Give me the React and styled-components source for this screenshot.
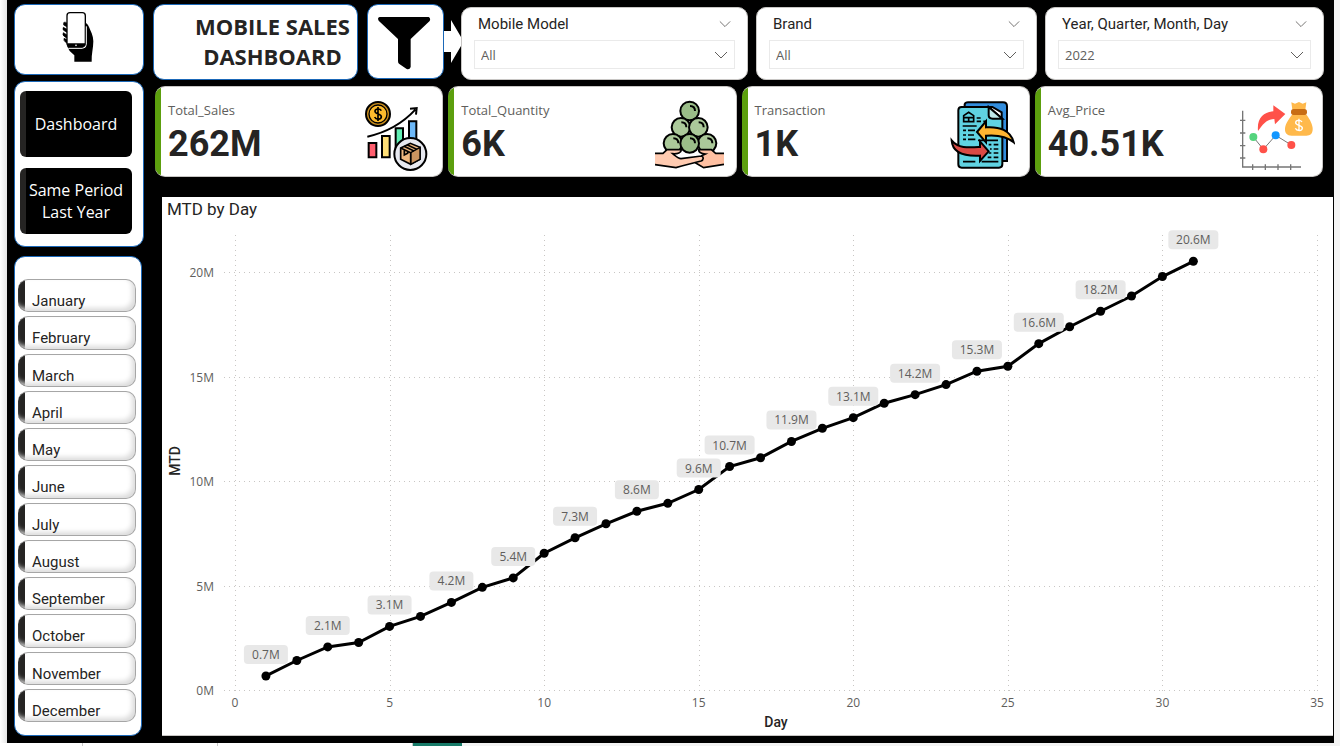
import React from "react";
import styled, { createGlobalStyle } from "styled-components";

const din = `Roboto, "Liberation Sans", sans-serif`;
const segoe = `"Open Sans", "Noto Sans", sans-serif`;

const GlobalStyle = createGlobalStyle`
  *, *::before, *::after { box-sizing: border-box; }
  body { margin: 0; background: #f3f3f3; color: #252423; font-family: ${segoe}; }
  button, select { font: inherit; color: inherit; }
  svg { display: block; }
`;

const Page = styled.div`
  display: flex;
  flex-direction: column;
  min-height: 100vh;
  background: linear-gradient(to right, #fff, #e6e6e6 7px, #f3f3f3 7px);
`;

const Canvas = styled.div`
  flex: 1;
  display: flex;
  gap: 9px;
  margin: 0 6px 0 7px;
  padding: 4px 1px 7px 7px;
  background: #000;
`;

const Sidebar = styled.aside`
  flex: none;
  width: 130px;
  display: flex;
  flex-direction: column;
`;

const Main = styled.main`
  flex: 1;
  min-width: 0;
  display: flex;
  flex-direction: column;
`;

const Card = styled.section`
  background: #fff;
  border: 1px solid #1b68b8;
  border-radius: 11px;
`;

const LogoCard = styled(Card)`
  height: 71px;
  margin-bottom: 6px;
  padding-top: 6px;
  padding-right: 4px;
  display: flex;
  justify-content: center;
`;

const NavCard = styled(Card).attrs({ as: "nav" })`
  display: flex;
  flex-direction: column;
  gap: 11px;
  height: 166px;
  margin-bottom: 9px;
  padding: 9px 11px 12px 5px;
`;

const NavButton = styled.button`
  flex: 1;
  padding: 0 2px;
  border: 0;
  border-radius: 6px;
  background: linear-gradient(to right, #252423 6px, #000 6px);
  color: #fff;
  font-size: 16px;
  line-height: 22px;
`;

const MonthCard = styled(Card)`
  flex: 1;
  display: flex;
  flex-direction: column;
  gap: 4px;
  margin-right: 2px;
  padding: 22px 5px 13px 3px;
`;

const MonthButton = styled.button`
  flex: 1;
  min-height: 30px;
  padding: 11px 14px 0;
  border: 1px solid #a6a6a6;
  border-left: 0;
  border-radius: 10px;
  background: linear-gradient(to right, #252423 7px, #fff 7px);
  box-shadow: inset -3px -3px 5px #dcdcdc;
  font-family: ${din};
  font-size: 15px;
  font-weight: 400;
  line-height: 20px;
  text-align: left;
`;

const TopRow = styled.header`
  display: flex;
  height: 78px;
  margin-right: 9px;
`;

const TitleCard = styled(Card)`
  flex: none;
  width: 205px;
  height: 76px;
  margin-right: 9px;
  padding: 6px 0 0 34px;
`;

const Title = styled.h1`
  margin: 0;
  font-size: 22px;
  font-weight: 700;
  line-height: 30px;
  text-align: center;
`;

const FilterCard = styled(Card)`
  flex: none;
  width: 77px;
  height: 75px;
  display: flex;
  justify-content: center;
  padding: 11px 4px 0 0;
`;

const ArrowSlot = styled.div`
  flex: none;
  width: 17px;
  padding-top: 15px;
`;

const SlicerRow = styled.div`
  flex: 1;
  min-width: 0;
  display: grid;
  grid-template-columns: 287fr 281fr 279fr;
  gap: 8px;
  padding-top: 3px;
`;

const SlicerCard = styled.section`
  height: 73px;
  min-width: 0;
  padding: 6px 12px 0;
  border: 1px solid #c8c6c4;
  border-radius: 10px;
  background: #fff;
`;

const SlicerHead = styled.div`
  display: flex;
  justify-content: space-between;
  align-items: center;
  height: 20px;
  margin-bottom: 6px;
  padding: 0 4px;
  font-family: ${din};
  font-size: 15px;
`;

const ChevronButton = styled.button`
  padding: 0;
  border: 0;
  background: none;
`;

const SelectBox = styled.div`
  display: grid;
  align-items: center;
  height: 29px;
  border: 1px solid #eaeaea;
  color: #605e5c;
  & > * { grid-area: 1 / 1; }
  & > svg { justify-self: end; margin-right: 6px; pointer-events: none; }
`;

const Select = styled.select`
  appearance: none;
  width: 100%;
  height: 100%;
  padding: 0 24px 0 6px;
  border: 0;
  background: transparent;
  font-size: 13px;
`;

const KpiRow = styled.div`
  display: grid;
  grid-template-columns: repeat(4, 1fr);
  gap: 5px;
  margin: 4px 10px 20px 2px;
`;

const KpiCard = styled.section`
  display: flex;
  justify-content: space-between;
  height: 91px;
  padding: 13px 7px 0 13px;
  border: 1px solid #c8c6c4;
  border-left: 0;
  border-radius: 10px;
  background: linear-gradient(to right, #5c9f0e 6px, #fff 6px);
`;

const KpiLabel = styled.h2`
  margin: 0;
  color: #605e5c;
  font-size: 13px;
  font-weight: 400;
  line-height: 20px;
`;

const KpiValue = styled.p`
  margin: 0;
  font-family: ${din};
  font-size: 36px;
  font-weight: 700;
  line-height: 48px;
`;

const KpiIcon = styled.div`
  display: flex;
  justify-content: center;
  width: 78px;
`;

const ChartCard = styled.section`
  flex: 1;
  margin-left: 9px;
  border-bottom: 1px solid #c8c6c4;
  background: #fff;
`;

const ChartTitle = styled.h2`
  margin: 0;
  padding-left: 5px;
  font-family: ${din};
  font-size: 17px;
  font-weight: 400;
  line-height: 24px;
`;

const Chart = styled.svg`
  width: 100%;
  height: auto;
  font-family: ${segoe};
  font-size: 12px;
  fill: #605e5c;
  text-anchor: middle;
`;

const AxisTitle = styled.text`
  fill: #252423;
  font-family: ${din};
  font-size: 14px;
  font-weight: 500;
`;

const TabStrip = styled.footer`
  display: flex;
  height: 3px;
`;

const Tab = styled.div`
  flex: none;
  width: ${(p) => p.$width}px;
  border-right: ${(p) => (p.$active ? "0" : "1px solid #c8c8c8")};
  background: ${(p) => (p.$active ? "#177a68" : "#fff")};
`;

const Chevron = ({ size = 14 }) => (
  <svg width={size} height="8" viewBox="0 0 14 8" fill="none" stroke="#605e5c" aria-hidden="true">
    <path d="M1 1l6 6 6-6" />
  </svg>
);

const PhoneIcon = () => (
  <svg width="33" height="51" viewBox="180 33 99 153" aria-hidden="true">
    <path d="M198 138l8 15 14 13v19h52c-1-22 5-40 5-61 0-17-8-31-13-43-4-10-8-13-13-12v73z" />
    <path d="M188 68c4-3 8-1 12 3v11l-12-7zM187 82q-4 8 4 11l9 5v-9zM187 98q-4 8 4 12l9 6v-10zM189 115q-2 7 4 11l8 6-1-12z" stroke="#000" strokeWidth="2" />
    <rect x="198" y="38" width="55" height="101" rx="9" fill="#fff" stroke="#000" strokeWidth="4" />
    <path d="M199 130h53v4q-1 7-7 7h-39q-7-1-7-7z" />
    <path d="M202 145h42q12-1 12-12V79" fill="none" stroke="#fff" strokeWidth="3" />
    <circle cx="225" cy="136" r="2.5" fill="#fff" />
  </svg>
);

const FunnelIcon = () => (
  <svg width="54" height="54" viewBox="255 48 162 162" aria-hidden="true">
    <path d="M263 51h147q7 4 3 12l-57 54v84q-3 9-12 6l-23-16q-3-2-3-8v-66l-58-55q-5-9 3-11z" />
  </svg>
);

const ArrowIcon = () => (
  <svg width="17" height="45" viewBox="0 0 17 45" fill="#fff" aria-hidden="true">
    <path d="M0 12h7V1l10 17v9L7 44V33H0z" />
  </svg>
);

const SalesIcon = () => (
  <svg width="64" height="71" viewBox="42 30 192 213" fill="none" stroke="#000" strokeWidth="6" aria-hidden="true">
    <path d="M52 140c55-12 106-40 144-81M180 56l20-2-2 20" />
    <circle cx="84" cy="72" r="36" fill="#c98d1c" />
    <circle cx="84" cy="72" r="27" fill="#fdbb2d" strokeWidth="4" />
    <path d="M94 62c-4-7-19-7-19 2 0 10 19 6 19 16 0 9-16 10-20 1M84 51v42" strokeWidth="5" />
    <path d="M56 159h23v43H56z" fill="#ff5e6e" />
    <path d="M96 138h23v64H96z" fill="#ffdf76" />
    <path d="M137 115h22v80h-22z" fill="#61efb4" />
    <path d="M177 94h22v80h-22z" fill="#6cb8f8" />
    <circle cx="181" cy="192" r="48" fill="#e7e9f0" />
    <path d="M152 174l29-14 29 12v36l-28 15-30-15z" fill="#edb77f" strokeWidth="5" />
    <path d="M182 188l28-16v36l-28 15z" fill="#cb9560" strokeWidth="4" />
    <path d="M152 174l30 14v34M162 169l30 14M171 164l29 14M163 178v17l10-5v-8" strokeWidth="5" />
  </svg>
);

const spheres = [
  [146, 66], [120, 115], [172, 115], [96, 163], [198, 163], [146, 163],
];

const QuantityIcon = () => (
  <svg width="69" height="70" viewBox="42 33 207 210" fill="none" stroke="#000" strokeWidth="6" aria-hidden="true">
    {spheres.map(([x, y], i) => (
      <g key={i}>
        <circle cx={x} cy={y} r="28" fill={i === 0 || i === 5 ? "#9abd88" : "#abc99a"} />
        <path d={`M${x + 1} ${y - 15}q15 0 15 15`} />
      </g>
    ))}
    <path d="M42 193h22l15-10h42c2 10-11 12-26 12 10 7 15 14 24 15l62-9c7 1 6 12-1 14l-62 16-14 5-62-8z" fill="#ffcbb1" stroke="none" />
    <path d="M249 193h-25l-13-10h-37c-3 8 5 11 19 13l-12 6c7 0 7 12 0 15l-19 6 26 14 61-11z" fill="#ffc0a2" stroke="none" />
    <path d="M42 193h24l12-11h43c0 9-11 13-26 12 12 10 16 15 25 15l61-8c8 2 7 12-1 15l-58 15-17 5-63-9M249 193h-25l-13-11h-38c0 9 9 12 20 13l-13 6M163 221l25 15 61-10" strokeWidth="5" />
  </svg>
);

const TransactionIcon = () => (
  <svg width="65" height="69" viewBox="30 33 195 207" fill="none" stroke="#000" strokeWidth="6" aria-hidden="true">
    <path d="M74 46q2-6 10-6h105q12 0 12 12v164h-16V70l-28-16H74z" fill="#328ddd" />
    <path d="M65 54h81l41 36v136q0 10-10 10H65q-10 0-10-10V64q0-10 10-10z" fill="#60d3e2" />
    <path d="M146 54v25q0 10 12 10h29z" fill="#bfe8e8" />
    <path d="M71 80l15-10 15 10v18H71zM71 86h30M86 84v15M110 87h12M130 97h11M110 97h13M68 111h42M69 124h9M84 124h21M69 138h9M84 138h18M69 151h9M84 151h22M114 154h60M146 167h8M161 167h14M150 180h5M161 180h14M146 192h8M161 192h14M143 205h11M161 205h14M69 218h37M125 218h50" strokeWidth="5" />
    <path d="M111 129l27-32v18c39-3 74 9 83 45-20-17-46-23-83-20v20z" fill="#ffb531" />
    <path d="M146 187l-26-30v17c-34 2-65 5-85-20 2 32 26 49 85 46v16z" fill="#d94a45" />
  </svg>
);

const PriceIcon = () => (
  <svg width="76" height="71" viewBox="24 30 228 213" fill="none" stroke="#757575" strokeWidth="4" aria-hidden="true">
    <path d="M38 62v169h175M30 91h16M30 129h16M30 167h16M30 204h16M68 223v17M106 223v17M144 223v17M182 223v17" />
    <path d="M70 141l30 37 37-42 47 29" strokeWidth="3" />
    <g stroke="none">
      <circle cx="70" cy="141" r="12" fill="#55d47d" />
      <circle cx="100" cy="178" r="12" fill="#ff5149" />
      <circle cx="137" cy="136" r="12" fill="#1397ff" />
      <circle cx="184" cy="165" r="12" fill="#ff5149" />
      <path d="M84 123c-4-41 19-58 46-59V46l36 26-31 31-2-16c-21 0-33 13-49 36z" fill="#ff5149" />
      <path d="M184 37l11 4 12-5 11 5 11-4-3 22h-39zM187 72h41c8 12 18 25 20 42 1 17-7 23-19 23h-44c-14 0-21-7-20-22 2-18 14-29 22-43z" fill="#ffb94b" />
      <rect x="183" y="57" width="48" height="18" rx="8" fill="#c86d14" />
    </g>
    <path d="M216 96c-4-7-19-7-19 2s20 7 20 16c0 10-17 10-21 1M207 86v37" stroke="#fff" strokeWidth="4" />
  </svg>
);

const months = [
  "January", "February", "March", "April", "May", "June", "July",
  "August", "September", "October", "November", "December",
];

const slicers = [
  { id: "model", label: "Mobile Model", value: "All" },
  { id: "brand", label: "Brand", value: "All" },
  { id: "date", label: "Year, Quarter, Month, Day", value: "2022" },
];

const kpis = [
  { label: "Total_Sales", value: "262M", Icon: SalesIcon },
  { label: "Total_Quantity", value: "6K", Icon: QuantityIcon },
  { label: "Transaction", value: "1K", Icon: TransactionIcon },
  { label: "Avg_Price", value: "40.51K", Icon: PriceIcon },
];

const mtd = [
  0.72, 1.46, 2.11, 2.32, 3.09, 3.57, 4.24, 4.96, 5.41, 6.59, 7.33, 8.0, 8.6,
  8.98, 9.64, 10.74, 11.16, 11.94, 12.57, 13.08, 13.77, 14.18, 14.66, 15.3,
  15.54, 16.62, 17.43, 18.17, 18.9, 19.83, 20.56,
];
const labelledDays = [1, 3, 5, 7, 9, 11, 13, 15, 16, 18, 20, 22, 24, 26, 28, 31];

const px = (day) => 73 + (day * 1082) / 35;
const py = (m) => 470 - m * 20.9;

function MtdChart() {
  return (
    <Chart viewBox="0 0 1171 514" role="img" aria-label="MTD by Day">
      <g stroke="#c8c6c4" strokeDasharray="1 4">
        {[0, 5, 10, 15, 20].map((m) => (
          <path key={m} d={`M62 ${Math.round(py(m)) - 0.5}H1156`} />
        ))}
        {[0, 5, 10, 15, 20, 25, 30, 35].map((d) => (
          <path key={d} d={`M${Math.round(px(d)) + 0.5} 14V470`} />
        ))}
      </g>
      {[0, 5, 10, 15, 20].map((m) => (
        <text key={m} x="52" y={py(m) + 4} textAnchor="end">{m}M</text>
      ))}
      {[0, 5, 10, 15, 20, 25, 30, 35].map((d) => (
        <text key={d} x={px(d)} y="486">{d}</text>
      ))}
      <AxisTitle x="614" y="506">Day</AxisTitle>
      <AxisTitle transform="translate(18 240) rotate(-90)">MTD</AxisTitle>
      <polyline
        points={mtd.map((m, i) => `${px(i + 1)},${py(m)}`).join(" ")}
        fill="none"
        stroke="#000"
        strokeWidth="3"
      />
      {mtd.map((m, i) => (
        <circle key={i} cx={px(i + 1)} cy={py(m)} r="4.5" fill="#000" />
      ))}
      {labelledDays.map((d) => {
        const text = `${mtd[d - 1].toFixed(1)}M`;
        const width = text.length > 4 ? 50 : 44;
        const y = py(mtd[d - 1]) - 21;
        return (
          <g key={d}>
            <rect x={px(d) - width / 2} y={y - 10} width={width} height="19" rx="4" fill="#e8e8e8" />
            <text x={px(d)} y={y + 4}>{text}</text>
          </g>
        );
      })}
    </Chart>
  );
}

export default function App() {
  return (
    <Page>
      <GlobalStyle />
      <Canvas>
        <Sidebar>
          <LogoCard><PhoneIcon /></LogoCard>
          <NavCard>
            <NavButton>Dashboard</NavButton>
            <NavButton>Same Period Last Year</NavButton>
          </NavCard>
          <MonthCard aria-label="Month">
            {months.map((m) => <MonthButton key={m}>{m}</MonthButton>)}
          </MonthCard>
        </Sidebar>
        <Main>
          <TopRow>
            <TitleCard><Title>MOBILE SALES<br />DASHBOARD</Title></TitleCard>
            <FilterCard><FunnelIcon /></FilterCard>
            <ArrowSlot><ArrowIcon /></ArrowSlot>
            <SlicerRow>
              {slicers.map((s) => (
                <SlicerCard key={s.id}>
                  <SlicerHead>
                    <label htmlFor={s.id}>{s.label}</label>
                    <ChevronButton aria-label={`Collapse ${s.label}`}><Chevron size={12} /></ChevronButton>
                  </SlicerHead>
                  <SelectBox>
                    <Select id={s.id} defaultValue={s.value}><option>{s.value}</option></Select>
                    <Chevron />
                  </SelectBox>
                </SlicerCard>
              ))}
            </SlicerRow>
          </TopRow>
          <KpiRow>
            {kpis.map(({ label, value, Icon }) => (
              <KpiCard key={label}>
                <div>
                  <KpiLabel>{label}</KpiLabel>
                  <KpiValue>{value}</KpiValue>
                </div>
                <KpiIcon><Icon /></KpiIcon>
              </KpiCard>
            ))}
          </KpiRow>
          <ChartCard>
            <ChartTitle>MTD by Day</ChartTitle>
            <MtdChart />
          </ChartCard>
        </Main>
      </Canvas>
      <TabStrip>
        <Tab $width={83} />
        <Tab $width={135} />
        <Tab $width={195} />
        <Tab $width={49} $active />
      </TabStrip>
    </Page>
  );
}
